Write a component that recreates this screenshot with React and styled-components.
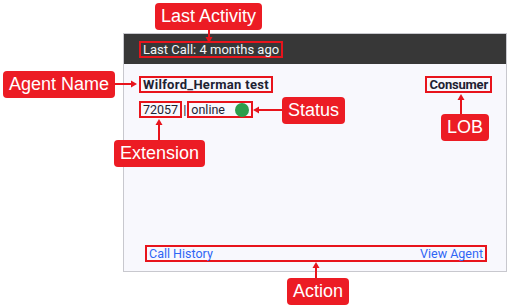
import React from "react";
import styled, { createGlobalStyle } from "styled-components";

const GlobalStyle = createGlobalStyle`
  body {
    margin: 0;
    background: #ffffff;
    font-family: Roboto, "Liberation Sans", sans-serif;
  }
`;

const Page = styled.div`
  position: relative;
  width: 516px;
  height: 308px;
  box-sizing: border-box;
  padding: 33px 9px 0 123px;
`;

const Card = styled.div`
  width: 384px;
  height: 239px;
  box-sizing: border-box;
  border: 1px solid #c8c8ce;
  background: #f8f8fd;
  display: flex;
  flex-direction: column;
`;

const Header = styled.div`
  height: 30px;
  background: #373737;
  display: flex;
  align-items: center;
  padding-left: 15px;
  color: #f2f4f8;
  font-size: 13px;
`;

const Body = styled.div`
  flex: 1;
  display: flex;
  flex-direction: column;
  padding: 12px 14px 9px 15px;
`;

const Row = styled.div`
  display: flex;
  align-items: center;
  justify-content: ${(p) => p.$justify || "flex-start"};
  margin-top: ${(p) => p.$top || 0}px;
`;

const Mark = styled.span`
  display: inline-flex;
  align-items: center;
  border: 2px solid #e8141c;
  padding: 0 2px;
  height: 13px;
  line-height: 13px;
  gap: ${(p) => p.$gap || 0}px;
`;

const Name = styled.span`
  font-size: 13px;
  font-weight: 700;
  color: #1e2233;
  letter-spacing: ${(p) => p.$spacing || 0}px;
`;

const Plain = styled.span`
  font-size: 12.5px;
  color: #1e2233;
`;

const Sep = styled.span`
  font-size: 13px;
  color: #1e2233;
  margin: 0 1px;
`;

const Dot = styled.span`
  width: 14px;
  height: 14px;
  border-radius: 50%;
  background: #2c9e4c;
`;

const Footer = styled.div`
  margin-top: auto;
  display: flex;
  padding: 0 5px 0 6px;
`;

const Links = styled(Mark)`
  flex: 1;
  justify-content: space-between;
`;

const Link = styled.a`
  font-size: 12.5px;
  color: #2f66f5;
  text-decoration: none;
  cursor: pointer;
`;

const Label = styled.div`
  position: absolute;
  left: ${(p) => p.$x}px;
  top: ${(p) => p.$y}px;
  height: 27px;
  padding: 0 6px;
  background: #ec1c24;
  border-radius: 4px;
  color: #ffffff;
  font-family: "Liberation Sans", Arial, sans-serif;
  font-size: 18px;
  line-height: 27px;
  white-space: nowrap;
`;

const Arrows = styled.svg`
  position: absolute;
  left: 0;
  top: 0;
  pointer-events: none;
`;

// arrow: line from (x1,y1) to tip (x2,y2)
const arrows = [
  [209, 30, 209, 43],
  [110, 84, 137, 84],
  [282, 110, 253, 110],
  [461, 114, 461, 94],
  [159, 140, 159, 119],
  [316, 278, 316, 262],
];

const Arrow = ({ a }) => {
  const [x1, y1, x2, y2] = a;
  const dx = x2 - x1;
  const dy = y2 - y1;
  const len = Math.hypot(dx, dy);
  const ux = dx / len;
  const uy = dy / len;
  const bx = x2 - ux * 6;
  const by = y2 - uy * 6;
  const px = -uy * 3.5;
  const py = ux * 3.5;
  return (
    <g>
      <line x1={x1} y1={y1} x2={bx} y2={by} stroke="#e8141c" strokeWidth="2" />
      <polygon
        points={`${x2},${y2} ${bx + px},${by + py} ${bx - px},${by - py}`}
        fill="#e8141c"
      />
    </g>
  );
};

export default function App() {
  return (
    <>
      <GlobalStyle />
      <Page>
        <Card>
          <Header>
            <Mark>Last Call: 4 months ago</Mark>
          </Header>
          <Body>
            <Row $justify="space-between">
              <Mark>
                <Name $spacing={0.3}>Wilford_Herman test</Name>
              </Mark>
              <Mark>
                <Name $spacing={-0.2}>Consumer</Name>
              </Mark>
            </Row>
            <Row $top={8}>
              <Mark>
                <Plain>72057</Plain>
              </Mark>
              <Sep>|</Sep>
              <Mark $gap={10}>
                <Plain>online</Plain>
                <Dot />
              </Mark>
            </Row>
            <Footer>
              <Links>
                <Link>Call History</Link>
                <Link>View Agent</Link>
              </Links>
            </Footer>
          </Body>
        </Card>

        <Arrows width="516" height="308">
          {arrows.map((a, i) => (
            <Arrow key={i} a={a} />
          ))}
        </Arrows>

        <Label $x={155} $y={3}>Last Activity</Label>
        <Label $x={3} $y={71}>Agent Name</Label>
        <Label $x={282} $y={97}>Status</Label>
        <Label $x={441} $y={114}>LOB</Label>
        <Label $x={114} $y={140}>Extension</Label>
        <Label $x={287} $y={278}>Action</Label>
      </Page>
    </>
  );
}
